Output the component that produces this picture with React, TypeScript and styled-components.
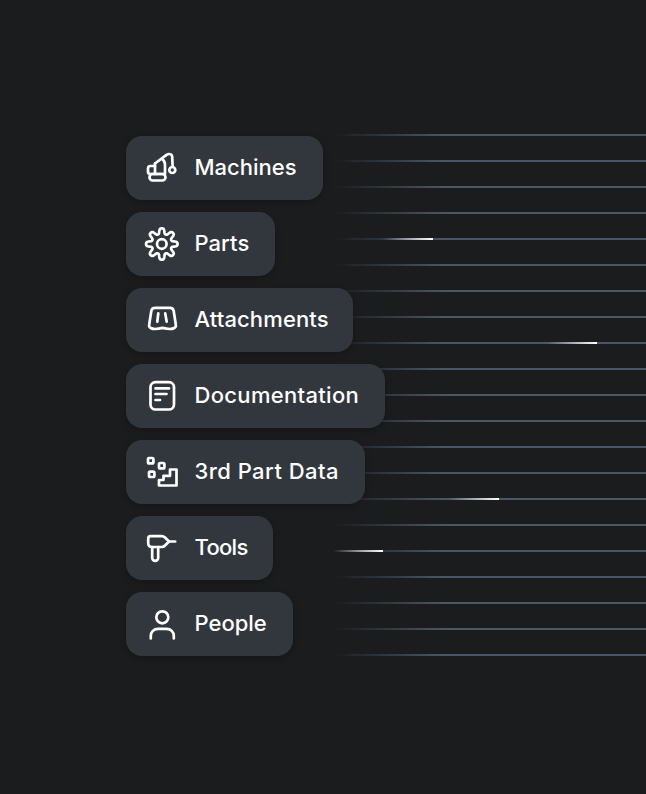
import { ReactNode } from 'react';
import styled, { createGlobalStyle } from 'styled-components';

interface Item {
  label: string;
  width: number;
  tracking: number;
  icon: ReactNode;
}

const GLINTS: Record<number, number> = {
  4: 97,
  8: 261,
  14: 163,
  16: 47,
};

const gearPath = () => {
  const points: string[] = [];
  for (let i = 0; i < 160; i += 1) {
    const angle = (i / 160) * Math.PI * 2;
    const wave = Math.cos(angle * 8);
    const r = 13 + 3 * Math.tanh(wave * 1.6);
    points.push(`${(17.8 + r * Math.cos(angle)).toFixed(2)} ${(18 + r * Math.sin(angle)).toFixed(2)}`);
  }
  return `M${points.join('L')}Z`;
};

const ITEMS: Item[] = [
  {
    label: 'Machines',
    width: 197,
    tracking: 0,
    icon: (
      <>
        <path d='M11 13.5 22.5 4.8Q24.5 3.6 26.5 4.2 28 4.8 28.2 6.5L28.6 16.5' />
        <circle cx='28.3' cy='20' r='3' />
        <path d='M11 16H6.5Q4 16 4 18.5V21.5Q4 24 6.5 24H21V14.5Q21 11 18 8.8' />
        <path d='M11 13.5V24' />
        <rect x='5.5' y='24' width='16' height='6.5' rx='3.2' />
      </>
    ),
  },
  {
    label: 'Parts',
    width: 149,
    tracking: 0.05,
    icon: (
      <>
        <path d={gearPath()} />
        <circle cx='17.8' cy='18' r='4.8' />
      </>
    ),
  },
  {
    label: 'Attachments',
    width: 227,
    tracking: 0.12,
    icon: (
      <>
        <path d='M11 5.8H26Q29.2 5.8 29.7 9L31.8 22.5Q32.3 25 30.3 26 28.5 27 26 27 22.5 27 18.5 25.9 14.5 27 11 27 8.5 27 6.7 26 4.7 25 5.2 22.5L7.3 9Q7.8 5.8 11 5.8Z' />
        <path d='M14.3 11.3 13.3 19.7M21.2 11.3 22.7 19.7' />
      </>
    ),
  },
  {
    label: 'Documentation',
    width: 259,
    tracking: 0.32,
    icon: (
      <>
        <rect x='6.5' y='4.2' width='23.5' height='27.3' rx='5' />
        <path d='M11.5 10.4H25M11.5 16H22.5M11.5 22H16' />
      </>
    ),
  },
  {
    label: '3rd Part Data',
    width: 239,
    tracking: 0.45,
    icon: (
      <>
        <rect x='4' y='4' width='5.4' height='5.4' rx='1.2' />
        <rect x='15' y='9' width='5.4' height='5.4' rx='1.2' />
        <rect x='5' y='17.6' width='5.4' height='5.4' rx='1.2' />
        <path d='M15 31.5H32.5V15.5H26V21.8H19.5V26H15Z' />
      </>
    ),
  },
  {
    label: 'Tools',
    width: 147,
    tracking: -0.7,
    icon: (
      <>
        <path d='M6.5 6.2H18Q19.5 6.2 21 7.5L25 11.5 21 15.5Q19.5 17 18 17H8Q4.2 17 4.2 13V9Q4.2 6.2 6.5 6.2Z' />
        <path d='M8.2 17V27.8A3 3 0 0 0 14.2 27.8V17M25 11.5H31.2' />
      </>
    ),
  },
  {
    label: 'People',
    width: 167,
    tracking: 0,
    icon: (
      <>
        <circle cx='18.3' cy='11.3' r='6' />
        <path d='M6.8 32.5V29.8A7 7 0 0 1 13.8 22.8H22.8A7 7 0 0 1 29.8 29.8V32.5' />
      </>
    ),
  },
];

function App() {
  return (
    <>
      <GlobalStyle />
      <Stage>
        <Lines>
          {Array.from({ length: 21 }, (_, index) => index).map((item) => (
            <Rail key={item}>
              {GLINTS[item] !== undefined && <Glint $end={GLINTS[item]} />}
            </Rail>
          ))}
        </Lines>
        <PillList>
          {ITEMS.map((item) => (
            <Pill key={item.label} $width={item.width}>
              <Icon viewBox='0 0 36 36'>{item.icon}</Icon>
              <Label $tracking={item.tracking}>{item.label}</Label>
            </Pill>
          ))}
        </PillList>
      </Stage>
    </>
  );
}

const GlobalStyle = createGlobalStyle`
  html,
  body {
    margin: 0;
    background: #1a1c1e;
  }

  body {
    font-family: 'Inter', 'Liberation Sans', sans-serif;
  }
`;

const Stage = styled.main`
  display: grid;
  width: 646px;
  height: 794px;
  padding-top: 134px;
  box-sizing: border-box;
  overflow: hidden;
  background: #1a1c1e;
`;

const Lines = styled.div`
  grid-area: 1 / 1;
  display: flex;
  flex-direction: column;
  gap: 24px;
  padding-left: 334px;
`;

const Rail = styled.div`
  position: relative;
  height: 2px;
  background: linear-gradient(
    90deg,
    rgba(75, 86, 102, 0) 0,
    rgba(75, 86, 102, 0.45) 50px,
    #4b5666 110px
  );
`;

const Glint = styled.span<{ $end: number }>`
  position: absolute;
  top: 0;
  left: ${({ $end }) => $end - 48}px;
  width: 50px;
  height: 2px;
  background: linear-gradient(90deg, rgba(255, 255, 255, 0), #fff);
`;

const PillList = styled.ul`
  grid-area: 1 / 1;
  z-index: 1;
  display: flex;
  flex-direction: column;
  align-items: flex-start;
  gap: 12px;
  margin: 0;
  padding: 2px 0 0 126px;
  list-style: none;
`;

const Pill = styled.li<{ $width: number }>`
  display: flex;
  align-items: center;
  gap: 14.5px;
  box-sizing: border-box;
  width: ${({ $width }) => $width}px;
  height: 64px;
  padding: 0 0 0 18px;
  border-radius: 16px;
  background: #32373e;
  box-shadow: 0 2px 6px rgba(0, 0, 0, 0.25);
`;

const Icon = styled.svg`
  flex: none;
  width: 36px;
  height: 36px;
  fill: none;
  stroke: #fff;
  stroke-width: 2.7;
  stroke-linecap: round;
  stroke-linejoin: round;
`;

const Label = styled.span<{ $tracking: number }>`
  margin-top: -2px;
  color: #fff;
  font-size: 22px;
  font-weight: 450;
  letter-spacing: ${({ $tracking }) => $tracking}px;
  line-height: 1;
  white-space: nowrap;
`;

export default App;
